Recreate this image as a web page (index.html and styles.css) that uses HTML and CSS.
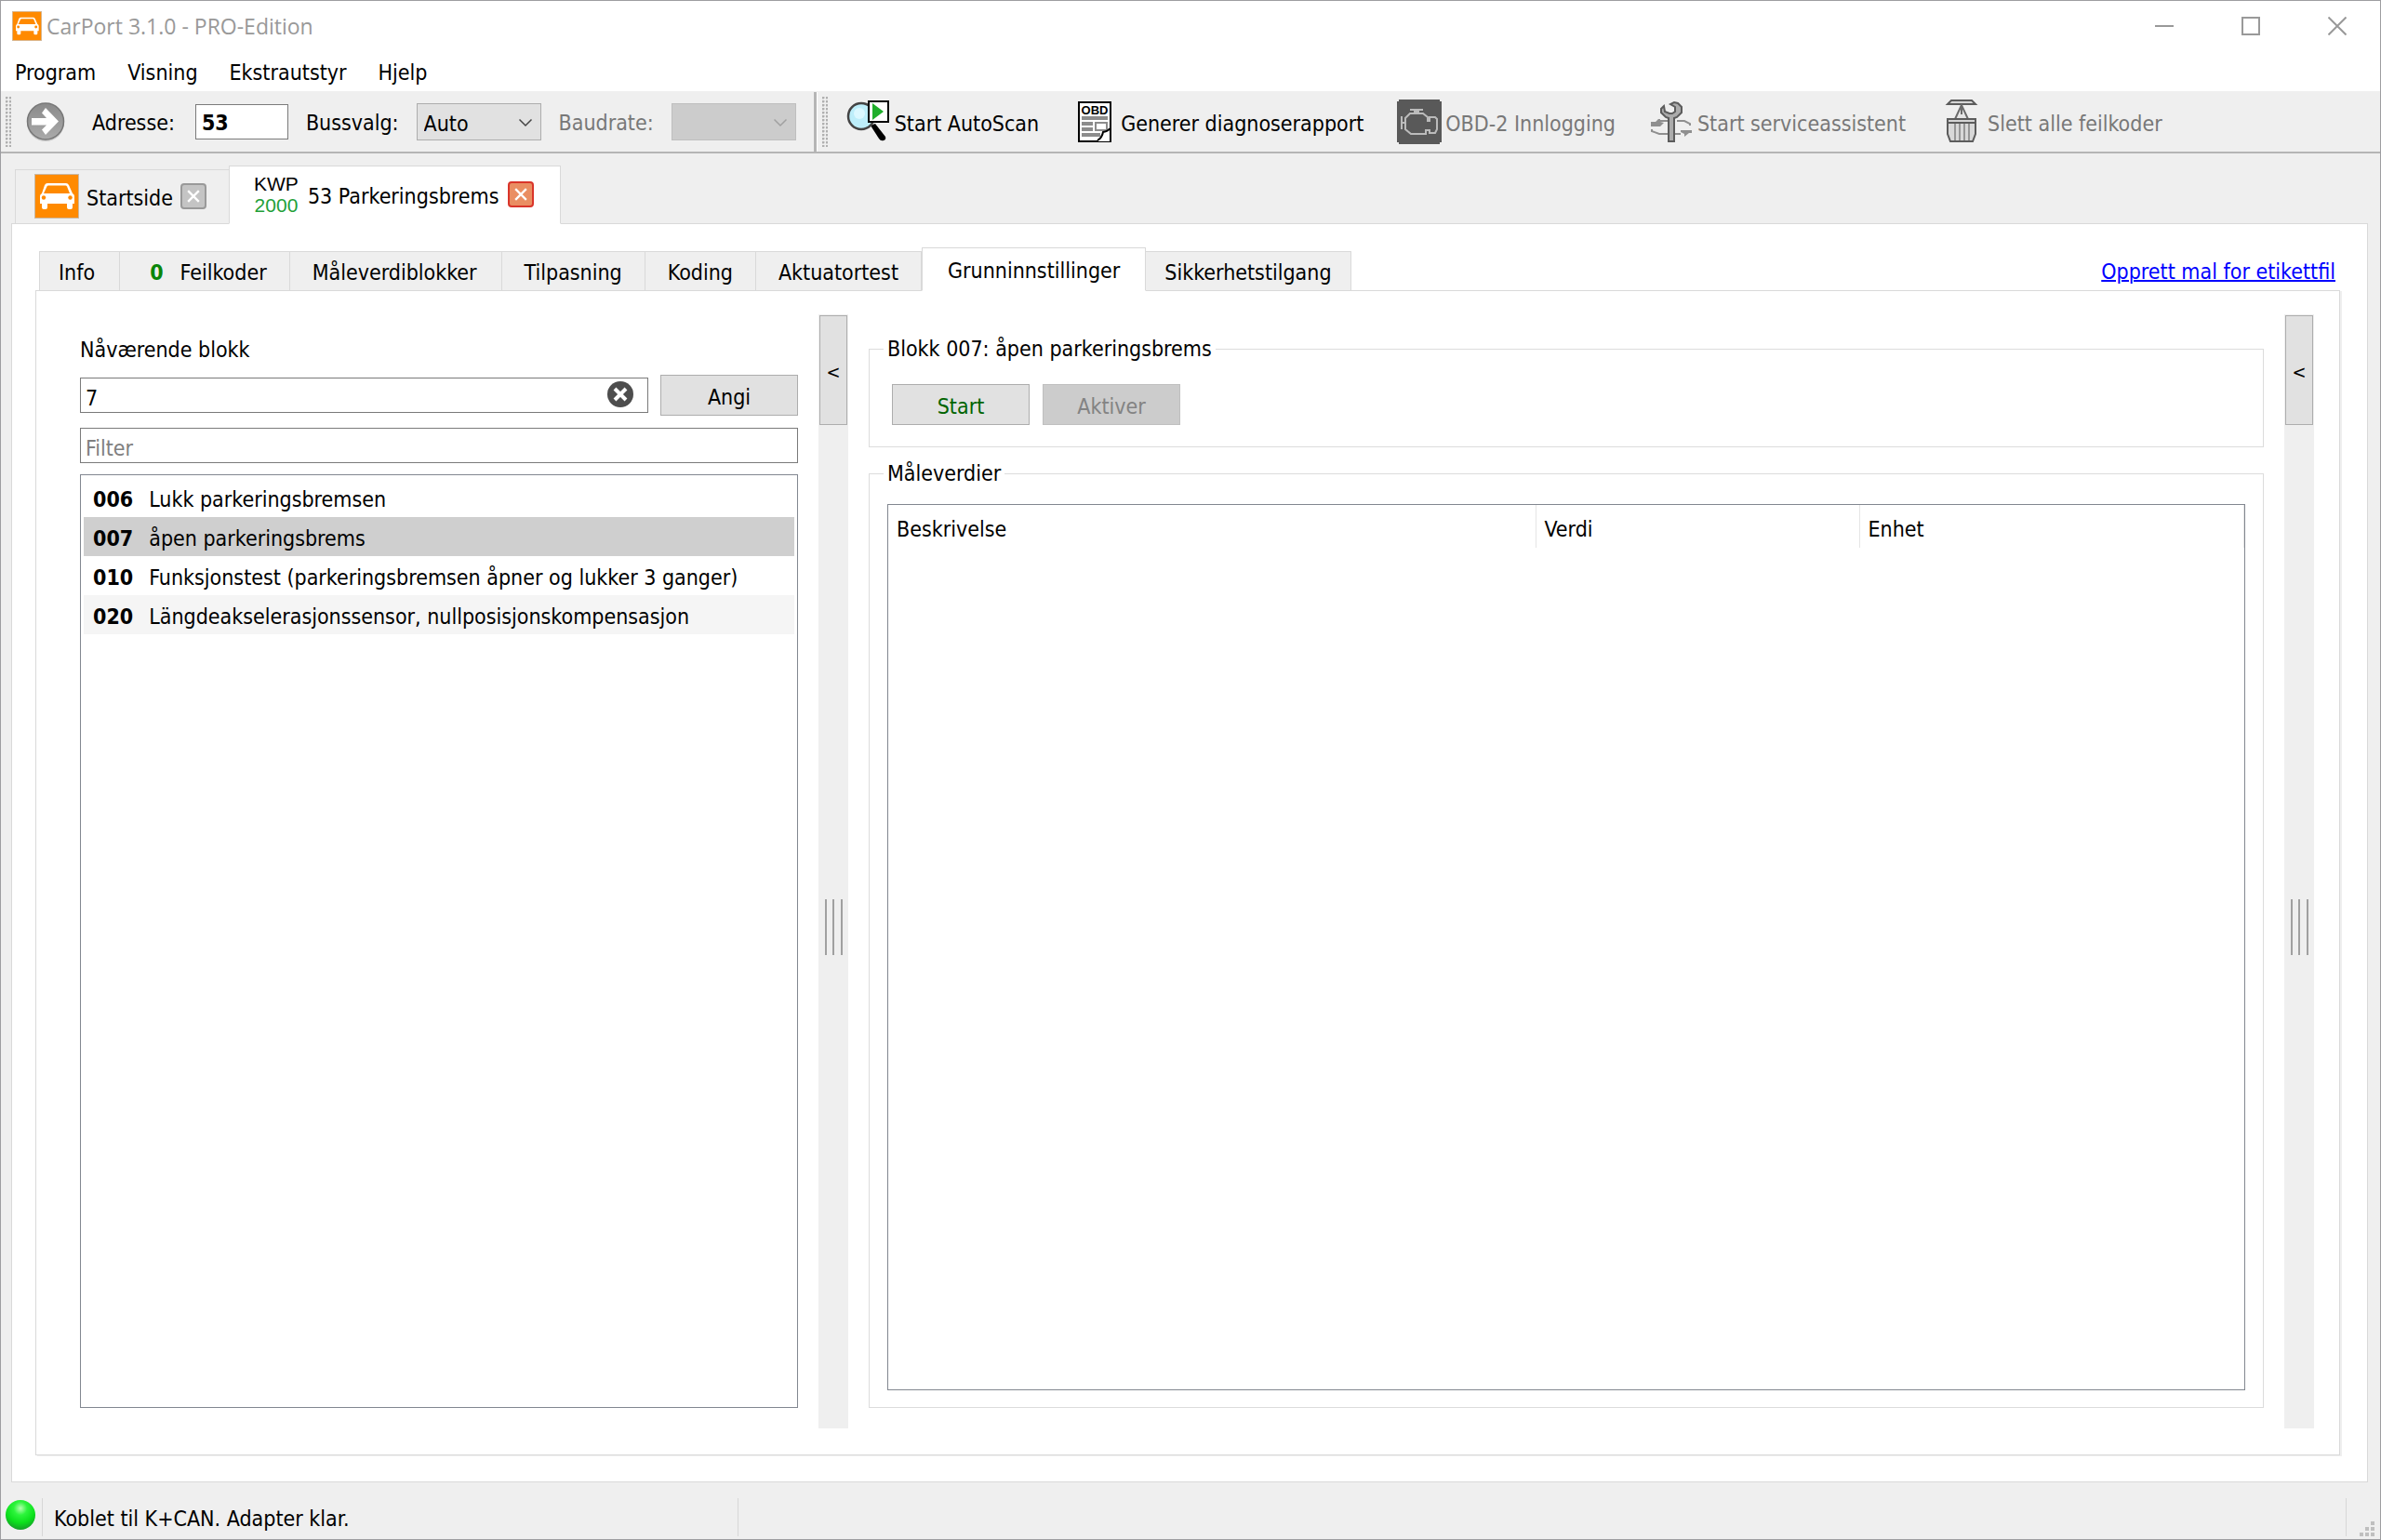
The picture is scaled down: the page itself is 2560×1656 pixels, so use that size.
FILE: index.html
```
<!DOCTYPE html>
<html lang="no">
<head>
<meta charset="utf-8">
<title>CarPort 3.1.0 - PRO-Edition</title>
<link rel="stylesheet" href="styles.css">
</head>
<body>
<svg class="defs" aria-hidden="true">
  <symbol id="car" viewBox="0 0 48 48">
    <rect x="0.5" y="0.5" width="47" height="47" fill="#ff8a00" stroke="#c9b8a2"/>
    <path d="M14 10h20q2 0 3 2l4 9q2 1 2 3v8H6v-8q0-2 2-3l3-9q1-2 3-2z" fill="#fff"/>
    <path d="M15 12.500h18.500q1 0 1.500 1l3 7.500H10l3.500-7.500q.5-1 1.500-1z" fill="#ff8a00"/>
    <circle cx="10" cy="25.500" r="2.200" fill="#ff8a00"/><circle cx="38.500" cy="25.500" r="2.200" fill="#ff8a00"/>
    <path d="M8 31h6v5q0 2-2 2h-2q-2 0-2-2zM35 31h6v5q0 2-2 2h-2q-2 0-2-2z" fill="#fff"/>
  </symbol>
  <symbol id="chevron" viewBox="0 0 16 10"><path d="M1.500 1.500L8 8l6.500-6.500" fill="none" stroke="currentColor" stroke-width="1.500"/></symbol>
  <symbol id="cross" viewBox="0 0 12 12"><path d="M1 1l10 10M11 1L1 11" fill="none" stroke="currentColor" stroke-width="2"/></symbol>
</svg>
<div class="window">
  <header class="titlebar">
    <svg class="app-icon"><use href="#car"/></svg>
    <span class="title">CarPort 3.1.0 - PRO-Edition</span>
    <button class="win-btn" aria-label="Minimer"><svg width="20" height="20"><path d="M0 10h20" stroke="#999" stroke-width="2"/></svg></button>
    <button class="win-btn" aria-label="Maksimer"><svg width="20" height="20"><rect x="1" y="1" width="18" height="18" fill="none" stroke="#999" stroke-width="2"/></svg></button>
    <button class="win-btn" aria-label="Lukk"><svg width="20" height="20"><path d="M0.500 0.500l19 19M19.500 0.500l-19 19" stroke="#999" stroke-width="2"/></svg></button>
  </header>
  <nav class="menubar">
    <button>Program</button><button>Visning</button><button>Ekstrautstyr</button><button>Hjelp</button>
  </nav>
  <div class="toolbars">
    <div class="toolbar address-bar">
      <span class="grip"></span>
      <button class="go" aria-label="Gå til adresse">
        <svg width="42" height="44" viewBox="0 0 42 44">
          <defs><linearGradient id="grey" x1="0" y1="0" x2="0" y2="1"><stop offset="0" stop-color="#8a8a8a"/><stop offset="1" stop-color="#aaa"/></linearGradient></defs>
          <circle cx="21" cy="23" r="20" fill="#c9c9c9"/>
          <circle cx="21" cy="21.500" r="19.500" fill="url(#grey)" stroke="#777" stroke-width="1.500"/>
          <path d="M6 18h16l-5-5.500 4-5.500 14 14.500L21 36l-4-5.500 5-5H6z" fill="#fff"/>
        </svg>
      </button>
      <label for="adresse">Adresse:</label>
      <input id="adresse" class="address" value="53">
      <label for="buss">Bussvalg:</label>
      <span class="combo"><select id="buss"><option>Auto</option></select><svg><use href="#chevron"/></svg></span>
      <label for="baud" class="off">Baudrate:</label>
      <span class="combo off"><select id="baud" disabled></select><svg><use href="#chevron"/></svg></span>
    </div>
    <div class="toolbar action-bar">
      <span class="grip"></span>
      <div class="actions">
        <button>
          <svg viewBox="0 0 48 48">
            <path d="M26 28l5-2 11 14q1 3-2 4-3 1-5-2z" fill="#000"/>
            <circle cx="16" cy="18" r="14" fill="#bdeefa" stroke="#444" stroke-width="2.500"/>
            <circle cx="14" cy="15" r="6" fill="#dcf8ff"/>
            <rect x="24" y="2" width="21" height="22" fill="#fff" stroke="#000" stroke-width="2"/>
            <path d="M28 4l12 9-12 9z" fill="#1fae2b"/>
          </svg><span>Start AutoScan</span></button>
        <button>
          <svg viewBox="0 0 48 48">
            <rect x="7" y="3" width="34" height="42" fill="#fff" stroke="#000" stroke-width="2"/>
            <text x="24" y="16" text-anchor="middle" class="obd">OBD</text>
            <path d="M10 18h28v4H10zM10 24h12v4H10zM10 30h12v4H10zM10 36h20v4H10z" fill="#8c8c8c"/>
            <path d="M25 25h12v8H25z" fill="#fff" stroke="#8c8c8c" stroke-width="2"/>
            <path d="M40 32q-2 0-4 3-4 0-4 3-1 4-5 7h13z" fill="#fff"/>
            <path d="M40 31q-1 3-7 4-1 6-6 9" fill="none" stroke="#000" stroke-width="2"/>
          </svg><span>Generer diagnoserapport</span></button>
        <button disabled>
          <svg viewBox="0 0 24 24">
            <path d="M1 0h22v1h1v22h-1v1H1v-1H0V1h1z" fill="#595959"/>
            <path d="M7 5.500h7M9 6.500h3M9 7.500L7 7.500 4.500 10v6L7.500 18.500h8V16.500h2v1.500h3L21.500 16v-5.500L20.500 9.500h-3v2h-1V9.500L14 7.500zM2.500 9v7M2.500 12.500h2" fill="none" stroke="#bbb"/>
          </svg><span>OBD-2 Innlogging</span></button>
        <button disabled>
          <svg viewBox="0 0 24 24">
            <path d="M10 11.500H6M15 11.500h4l3 1.500v1M14 18.500h3M10 18.500H5.500L1.500 17v-1" fill="none" stroke="#8f8f8f"/>
            <path d="M1 12h2.500L5 10.500h1V12l2 .5L6 14.500H1zM17 16.500h6V18h-1.500L19 20v-1.500l-2-1z" fill="#8f8f8f"/>
            <path d="M8 3.500L6.500 5v2L9 9.500l1.500.5v12.500h3V10l1.500-.5 2.500-2.500V4L15.500 2l-2-.5-2 1L14 4v2.500l-1.500 1H11L8.500 6.500z" fill="#ababab" stroke="#5c5c5c"/>
          </svg><span>Start serviceassistent</span></button>
        <button disabled>
          <svg viewBox="0 0 24 24">
            <path d="M6.500 .5h11l2 2h-15z" fill="#d5d5d5" stroke="#5c5c5c"/>
            <path d="M12 3l-3.500 7.500h7z" fill="#e6e6e6" stroke="#6b6b6b"/>
            <path d="M12 3v5" stroke="#6b6b6b"/>
            <path d="M4.500 12v6.500l1.500 4h12l1.500-4V12z" fill="#d8d8d8" stroke="#5c5c5c"/>
            <path d="M8.500 13v9M11 13v9M13.500 13v9M16 13v9" stroke="#969696"/>
            <path d="M4.500 10.500h15v2h-15z" fill="#d5d5d5" stroke="#5c5c5c"/>
          </svg><span>Slett alle feilkoder</span></button>
      </div>
    </div>
  </div>

  <main class="workspace">
    <div class="doc-tabs">
      <div class="doc-tab">
        <button class="doc-name"><svg class="tab-icon"><use href="#car"/></svg><span>Startside</span></button>
        <button class="tab-close" aria-label="Lukk Startside"><svg><use href="#cross"/></svg></button>
      </div>
      <div class="doc-tab current">
        <button class="doc-name"><span class="kwp">KWP<b>2000</b></span><span>53 Parkeringsbrems</span></button>
        <button class="tab-close hot" aria-label="Lukk 53 Parkeringsbrems"><svg><use href="#cross"/></svg></button>
      </div>
    </div>
    <section class="doc-pane">
      <div class="tab-row">
        <div class="tabs" role="tablist">
          <button role="tab" class="edge">Info</button>
          <button role="tab"><b class="count">0</b>Feilkoder</button>
          <button role="tab">Måleverdiblokker</button>
          <button role="tab">Tilpasning</button>
          <button role="tab">Koding</button>
          <button role="tab">Aktuatortest</button>
          <button role="tab" class="current" aria-selected="true">Grunninnstillinger</button>
          <button role="tab" class="edge">Sikkerhetstilgang</button>
        </div>
        <a href="#">Opprett mal for etikettfil</a>
      </div>
      <div class="panel">
        <section class="blocks">
          <label for="blokk">Nåværende blokk</label>
          <div class="set-row">
            <div class="clearable">
              <input id="blokk" value="7">
              <button class="clear" aria-label="Tøm"><svg width="28" height="28"><circle cx="14" cy="14" r="14" fill="#4d4d4d"/><path d="M8 8l12 12M20 8L8 20" stroke="#fff" stroke-width="4"/></svg></button>
            </div>
            <button class="push">Angi</button>
          </div>
          <input class="filter" placeholder="Filter" aria-label="Filter">
          <ul class="block-list">
            <li><b>006</b>Lukk parkeringsbremsen</li>
            <li class="selected"><b>007</b>åpen parkeringsbrems</li>
            <li><b>010</b>Funksjonstest (parkeringsbremsen åpner og lukker 3 ganger)</li>
            <li><b>020</b>Längdeakselerasjonssensor, nullposisjonskompensasjon</li>
          </ul>
        </section>
        <div class="splitter"><button>&lt;</button><span class="handle"></span></div>
        <section class="detail">
          <fieldset>
            <legend>Blokk 007: åpen parkeringsbrems</legend>
            <div class="commands">
              <button class="push start">Start</button>
              <button class="push" disabled>Aktiver</button>
            </div>
          </fieldset>
          <fieldset class="values">
            <legend>Måleverdier</legend>
            <div class="table-box">
              <table>
                <colgroup><col class="c-desc"><col class="c-value"><col></colgroup>
                <thead><tr><th>Beskrivelse</th><th>Verdi</th><th>Enhet</th></tr></thead>
                <tbody></tbody>
              </table>
            </div>
          </fieldset>
        </section>
        <div class="splitter"><button>&lt;</button><span class="handle"></span></div>
      </div>
    </section>
  </main>

  <footer class="statusbar">
    <svg class="led" viewBox="0 0 34 34">
      <defs><radialGradient id="led" cx=".5" cy=".28" r=".75"><stop offset="0" stop-color="#b4ffb0"/><stop offset=".3" stop-color="#2df53c"/><stop offset=".65" stop-color="#0ce01c"/><stop offset="1" stop-color="#17962a"/></radialGradient></defs>
      <circle cx="17" cy="17" r="16" fill="url(#led)"/>
    </svg>
    <span class="message">Koblet til K+CAN. Adapter klar.</span>
    <span class="spare"></span>
    <svg class="size-grip" width="16" height="16"><path d="M12 0h4v4h-4zM6 6h4v4H6zM12 6h4v4h-4zM0 12h4v4H0zM6 12h4v4H6zM12 12h4v4h-4z" fill="#bfbfbf"/></svg>
  </footer>
</div>
</body>
</html>
```
FILE: styles.css
```
* { box-sizing: border-box; }

body {
  margin: 0;
  font: 23px/26px "DejaVu Sans Condensed", "DejaVu Sans", sans-serif;
  color: #000;
  background: #efefef;
}

button, input, select { font: inherit; color: inherit; margin: 0; border-radius: 0; }
button { padding: 0; border: 0; background: none; white-space: nowrap; }
svg { display: block; flex: none; }
.defs { position: absolute; width: 0; height: 0; }

.window {
  min-height: 100vh;
  display: flex;
  flex-direction: column;
  border: 1px solid #9d9da1;
}

/* Title and menu */
.titlebar {
  display: flex;
  align-items: center;
  height: 54px;
  padding-left: 12px;
  background: #fff;
}
.app-icon { width: 32px; height: 32px; }
.title {
  flex: 1;
  padding-left: 5px;
  font-family: "Open Sans", sans-serif;
  color: #999;
}
.win-btn { width: 93px; height: 54px; display: grid; place-items: center; }

.menubar {
  display: flex;
  gap: 34px;
  height: 44px;
  padding: 2px 15px 0;
  background: #fff;
  border-bottom: 1px solid #efefef;
}

/* Toolbars */
.toolbars { display: flex; height: 66px; border-bottom: 2px solid #b5b5b5; }
.toolbar { display: flex; align-items: center; }
.toolbar label { padding-top: 2px; }
.address-bar { gap: 19px; padding: 0 19px 0 5px; border-right: 3px solid #b5b5b5; }
.action-bar { flex: 1; gap: 20px; padding-left: 5px; border-left: 1px solid #fff; }
.grip {
  width: 6px;
  height: 54px;
  background: radial-gradient(circle at 1px 1px, #b0b0b0 1px, transparent 2px) 0 0 / 4px 4px;
}
.go { margin: 0 10px 0 -3px; }
.off { color: #787878; }
.address { width: 100px; height: 38px; margin-left: 3px; padding: 2px 6px 0; border: 1px solid #7a7a7a; background: #fff; font-weight: bold; }

.combo { position: relative; width: 134px; height: 40px; color: #444; }
.combo select {
  width: 100%;
  height: 100%;
  padding: 3px 7px 0;
  appearance: none;
  border: 1px solid #adadad;
  background: #e1e1e1;
  color: #000;
}
.combo svg { position: absolute; right: 9px; top: 16px; width: 16px; height: 10px; pointer-events: none; }
.combo.off { color: #a0a0a0; }
.combo.off select { border-color: #bfbfbf; background: #ccc; opacity: 1; }

.actions { display: flex; gap: 36px; }
.actions button { display: flex; align-items: center; gap: 4px; }
.actions svg { width: 48px; height: 48px; }
.actions span { padding-top: 3px; }
.actions button:disabled { color: #787878; }
.obd { font: bold 13px "Liberation Sans", sans-serif; }

/* Document tabs */
.workspace {
  flex: 1;
  display: flex;
  flex-direction: column;
  padding: 13px 13px 0 11px;
}
.doc-tabs { display: flex; align-items: flex-end; margin: 0 4px -1px; }
.doc-tab {
  display: flex;
  align-items: center;
  gap: 8px;
  height: 59px;
  padding: 0 24px 2px 20px;
  border: 1px solid #d9d9d9;
  border-right: 0;
}
.doc-tab.current {
  z-index: 1;
  gap: 10px;
  height: 63px;
  padding: 0 28px 1px 26px;
  border-right: 1px solid #d9d9d9;
  border-bottom-color: #fff;
  background: #fff;
}
.doc-name { display: flex; align-items: center; gap: 8px; }
.doc-name > span:last-child { padding-top: 4px; }
.tab-icon { width: 48px; height: 48px; }
.kwp {
  width: 48px;
  font: 21px/23px "Liberation Sans", sans-serif;
}
.kwp b { display: block; font-weight: normal; color: #22a038; }
.current .doc-name { gap: 10px; }
.tab-close {
  display: grid;
  place-items: center;
  width: 28px;
  height: 28px;
  border: 2px solid #999;
  border-radius: 4px;
  background: #c4c4c4;
  color: #fff;
}
.tab-close svg { width: 14px; height: 14px; }
.tab-close.hot { border-color: #d9352a; background: #ea8e62; }

.doc-pane {
  flex: 1;
  display: flex;
  flex-direction: column;
  padding: 25px 29px 28px 25px;
  border: 1px solid #d9d9d9;
  background: #fff;
}

/* Function tabs */
.tab-row { display: flex; justify-content: space-between; margin-bottom: -1px; padding: 0 5px 0 4px; }
.tab-row a { padding-top: 13px; color: #00f; text-decoration-thickness: 2px; }
.tabs { display: flex; align-items: flex-end; }
.tabs button {
  height: 43px;
  padding: 3px 24px 0;
  border: 1px solid #d9d9d9;
  border-left: 0;
  background: #efefef;
}
.tabs .edge { padding: 3px 20px 0; }
.tabs .edge:first-child { padding-right: 26px; border-left: 1px solid #d9d9d9; }
.tabs .current {
  z-index: 1;
  height: 47px;
  padding: 3px 27px 0;
  border-left: 1px solid #d9d9d9;
  border-bottom-color: #fff;
  background: #fff;
}
.count { padding: 0 18px 0 8px; color: #0a860a; }
.tabs button:nth-child(3) { padding-right: 26px; }

.panel {
  flex: 1;
  display: grid;
  grid-template-columns: minmax(0, 772fr) 32px minmax(0, 1500fr) 32px;
  gap: 22px;
  padding: 25px 27px 28px 47px;
  border: 1px solid #d9d9d9;
  box-shadow: 2px 1px 0 #efefef;
}

/* Block list */
.blocks { display: flex; flex-direction: column; padding: 25px 0 22px; }
.set-row { display: flex; align-items: center; gap: 13px; margin: 14px 0 13px; }
.clearable { position: relative; flex: 1; }
.blocks input {
  display: block;
  width: 100%;
  height: 38px;
  padding: 5px 5px 0;
  border: 1px solid #7a7a7a;
  background: #fff;
}
.filter::placeholder { color: #808080; opacity: 1; }
.clear { position: absolute; right: 16px; top: 4px; }
.push {
  width: 148px;
  height: 44px;
  padding-top: 3px;
  border: 1px solid #adadad;
  background: #e1e1e1;
}
.push:disabled { border-color: #bfbfbf; background: #ccc; color: #838383; }
.start { color: #006400; }

.block-list {
  flex: 1;
  margin: 12px 0 0;
  padding: 3px;
  border: 1px solid #828790;
  list-style: none;
}
.block-list li { display: flex; gap: 17px; height: 42px; padding: 10px 10px 0; white-space: nowrap; }
.block-list li:nth-child(even) { background: #f5f5f5; }
.block-list .selected.selected { background: #cfcfcf; }

/* Splitters */
.splitter { display: flex; flex-direction: column; align-items: center; background: #efefef; }
.splitter button { width: 30px; height: 118px; margin-top: 1px; padding-top: 4px; border: 1px solid #adadad; background: #e1e1e1; font-size: 20px; }
.handle {
  width: 19px;
  height: 60px;
  margin: auto 0;
  border: 2px solid #a0a0a0;
  border-width: 0 2px;
  background: linear-gradient(#a0a0a0, #a0a0a0) center / 2px 100% no-repeat;
}

/* Detail */
.detail { display: flex; flex-direction: column; gap: 15px; padding: 24px 0 22px; }
fieldset { min-width: 0; margin: 0; padding: 0 15px; border: 1px solid #dcdcdc; }
legend { padding: 0 4px; }
.commands { display: flex; gap: 14px; padding: 25px 9px 23px; }
.values { flex: 1; display: flex; }
.table-box { flex: 1; margin: 20px 4px 18px; border: 1px solid #828790; }
table { width: 100%; border-collapse: collapse; table-layout: fixed; }
.c-desc { width: 696px; }
.c-value { width: 348px; }
th { height: 46px; padding: 5px 9px 0; border-right: 1px solid #e5e5e5; font-weight: normal; text-align: left; }

/* Status bar */
.statusbar { display: flex; height: 61px; padding: 17px 6px 3px 4px; }
.led { width: 34px; height: 34px; margin-top: 1px; }
.message { width: 749px; margin-left: 6px; padding: 9px 12px 0; border: 1px solid #d7d7d7; border-width: 0 1px; }
.spare { flex: 1; margin-right: 14px; border-right: 1px solid #d7d7d7; }
.size-grip { align-self: flex-end; }
```
